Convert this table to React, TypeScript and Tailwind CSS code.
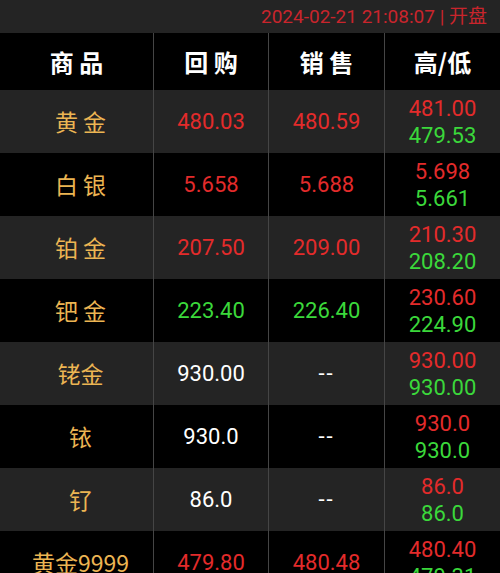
const cjk = "font-['Noto_Sans_CJK_SC',sans-serif]";
const num = "font-['Roboto','Noto_Sans_CJK_SC',sans-serif]";

type Row = {
  name: string;
  buy: string;
  sell: string;
  buyColor: string;
  high: string;
  low: string;
};

const RED = 'text-[#e32b2b]';
const GREEN = 'text-[#3bd83b]';
const WHITE = 'text-white';

const rows: Row[] = [
  { name: '黄 金', buy: '480.03', sell: '480.59', buyColor: RED, high: '481.00', low: '479.53' },
  { name: '白 银', buy: '5.658', sell: '5.688', buyColor: RED, high: '5.698', low: '5.661' },
  { name: '铂 金', buy: '207.50', sell: '209.00', buyColor: RED, high: '210.30', low: '208.20' },
  { name: '钯 金', buy: '223.40', sell: '226.40', buyColor: GREEN, high: '230.60', low: '224.90' },
  { name: '铑金', buy: '930.00', sell: '--', buyColor: WHITE, high: '930.00', low: '930.00' },
  { name: '铱', buy: '930.0', sell: '--', buyColor: WHITE, high: '930.0', low: '930.0' },
  { name: '钌', buy: '86.0', sell: '--', buyColor: WHITE, high: '86.0', low: '86.0' },
  { name: '黄金9999', buy: '479.80', sell: '480.48', buyColor: RED, high: '480.40', low: '479.31' },
];

const cols = 'grid grid-cols-[153px_115px_116px_116px]';
const cell = 'flex items-center justify-center border-l border-[#454545]';

export default function App() {
  return (
    <div className="w-[500px] h-[573px] overflow-hidden bg-black">
      <div className={`h-[33px] bg-[#242424] flex items-center justify-end pr-[13px] pt-[1px] text-[19px] text-[#c9252c] ${num}`}>
        2024-02-21 21:08:07 | 开盘
      </div>

      <div className={`${cols} h-[57px] bg-black text-white text-[24px] font-bold ${cjk}`}>
        <div className="flex items-center justify-center">商 品</div>
        <div className={cell}>回 购</div>
        <div className={cell}>销 售</div>
        <div className={cell}>高/低</div>
      </div>

      {rows.map((r, i) => (
        <div
          key={r.name}
          className={`${cols} h-[63px] ${i % 2 === 0 ? 'bg-[#242424]' : 'bg-black'}`}
        >
          <div className={`flex items-center justify-center pl-[8px] text-[23px] text-[#ecb553] ${cjk}`}>
            {r.name}
          </div>
          <div className={`${cell} text-[22px] ${r.buyColor} ${num}`}>{r.buy}</div>
          <div
            className={`${cell} text-[22px] ${r.sell === '--' ? `${WHITE} tracking-[2px]` : r.buyColor} ${num}`}
          >
            {r.sell}
          </div>
          <div className={`${cell} flex-col text-[22px] leading-[27px] ${num}`}>
            <span className={RED}>{r.high}</span>
            <span className={GREEN}>{r.low}</span>
          </div>
        </div>
      ))}
    </div>
  );
}
